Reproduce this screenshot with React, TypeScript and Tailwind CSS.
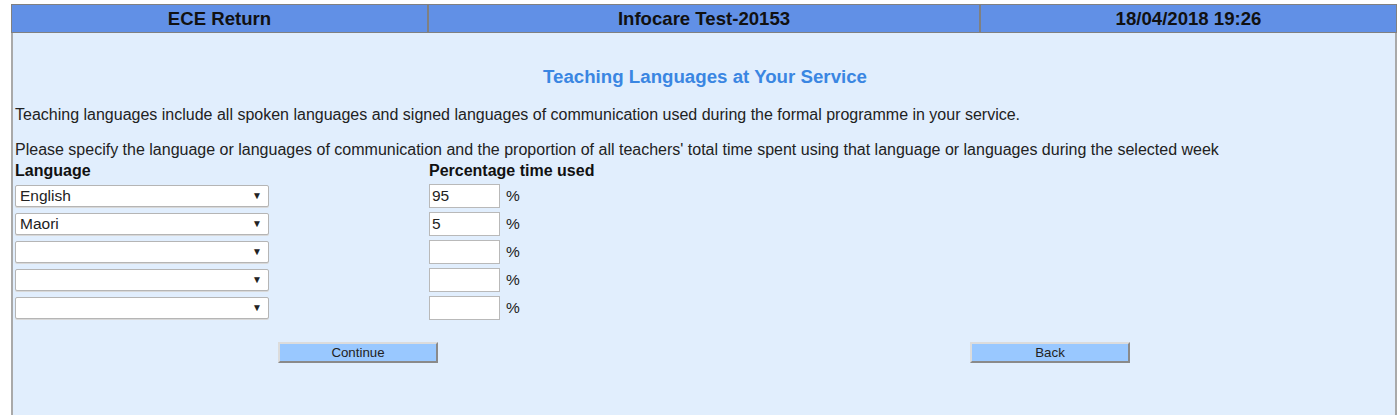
import React from "react";

const rows = [
  { lang: "English", pct: "95" },
  { lang: "Maori", pct: "5" },
  { lang: "", pct: "" },
  { lang: "", pct: "" },
  { lang: "", pct: "" },
];

function Select({ value }: { value: string }) {
  return (
    <div className="relative w-[254px] h-[22px] bg-white border border-[#b5b5b5] rounded-[2px] shadow-[0_1px_0_#d8d8d8]">
      <span className="absolute left-[4px] top-[0px] text-[15.5px] leading-[19px] text-[#222]">{value}</span>
      <span className="absolute right-[6px] top-[4px] text-[10px] leading-[12px] text-[#222]">▼</span>
    </div>
  );
}

function Pct({ value }: { value: string }) {
  return (
    <div className="flex items-center gap-[6px]">
      <div className="w-[71px] h-[24px] bg-white border border-[#b9b9b9] px-[2px] text-[15.5px] leading-[22px] text-[#222]">
        {value}
      </div>
      <span className="text-[15.5px] text-[#222]">%</span>
    </div>
  );
}

function Btn({ label }: { label: string }) {
  return (
    <div className="w-[160px] h-[21px] bg-[#99c8ff] border-2 border-t-[#dcdcdc] border-l-[#dcdcdc] border-r-[#8a8a8a] border-b-[#8a8a8a] flex items-center justify-center text-[13.3px] text-[#222]">
      {label}
    </div>
  );
}

export default function App() {
  return (
    <div className="w-[1397px] h-[415px] bg-white overflow-hidden" style={{ fontFamily: '"Liberation Sans", Arial, sans-serif' }}>
      <div className="ml-[11px] mt-[4px] w-[1386px]">
        <div className="grid grid-cols-[417px_552px_1fr] bg-[#6190e6] border border-[#808080] text-[18.6px] font-bold text-[#111] h-[29px]">
          <div className="flex items-center justify-center border-r-2 border-[#808080]">ECE Return</div>
          <div className="flex items-center justify-center border-r-2 border-[#808080]">Infocare Test-20153</div>
          <div className="flex items-center justify-center">18/04/2018 19:26</div>
        </div>
        <div className="h-[382px] bg-[#e1eefd] border-l-2 border-r-2 border-l-[#a9a9a9] border-r-[#a9a9a9] pl-[2px] pt-[33px]">
          <div className="text-center text-[18.7px] font-bold text-[#3a86e2] leading-[22px]">
            Teaching Languages at Your Service
          </div>
          <div className="mt-[17px] text-[16px] leading-[20px] text-[#222]">
            Teaching languages include all spoken languages and signed languages of communication used during the formal programme in your service.
          </div>
          <div className="mt-[15px] text-[16px] leading-[20px] text-[#222]">
            Please specify the language or languages of communication and the proportion of all teachers' total time spent using that language or languages during the selected week
          </div>
          <div className="grid grid-cols-[414px_1fr] mt-[1px]">
            <div className="text-[16px] font-bold leading-[19px] text-[#111]">Language</div>
            <div className="text-[16px] font-bold leading-[19px] text-[#111]">Percentage time used</div>
          </div>
          <div className="flex flex-col gap-[4px] mt-[4px]">
            {rows.map((r, i) => (
              <div key={i} className="grid grid-cols-[414px_1fr] items-center h-[24px]">
                <div><Select value={r.lang} /></div>
                <Pct value={r.pct} />
              </div>
            ))}
          </div>
          <div className="grid grid-cols-2 mt-[22px]">
            <div className="flex justify-center pr-[4px]"><Btn label="Continue" /></div>
            <div className="flex justify-center"><Btn label="Back" /></div>
          </div>
        </div>
      </div>
    </div>
  );
}
